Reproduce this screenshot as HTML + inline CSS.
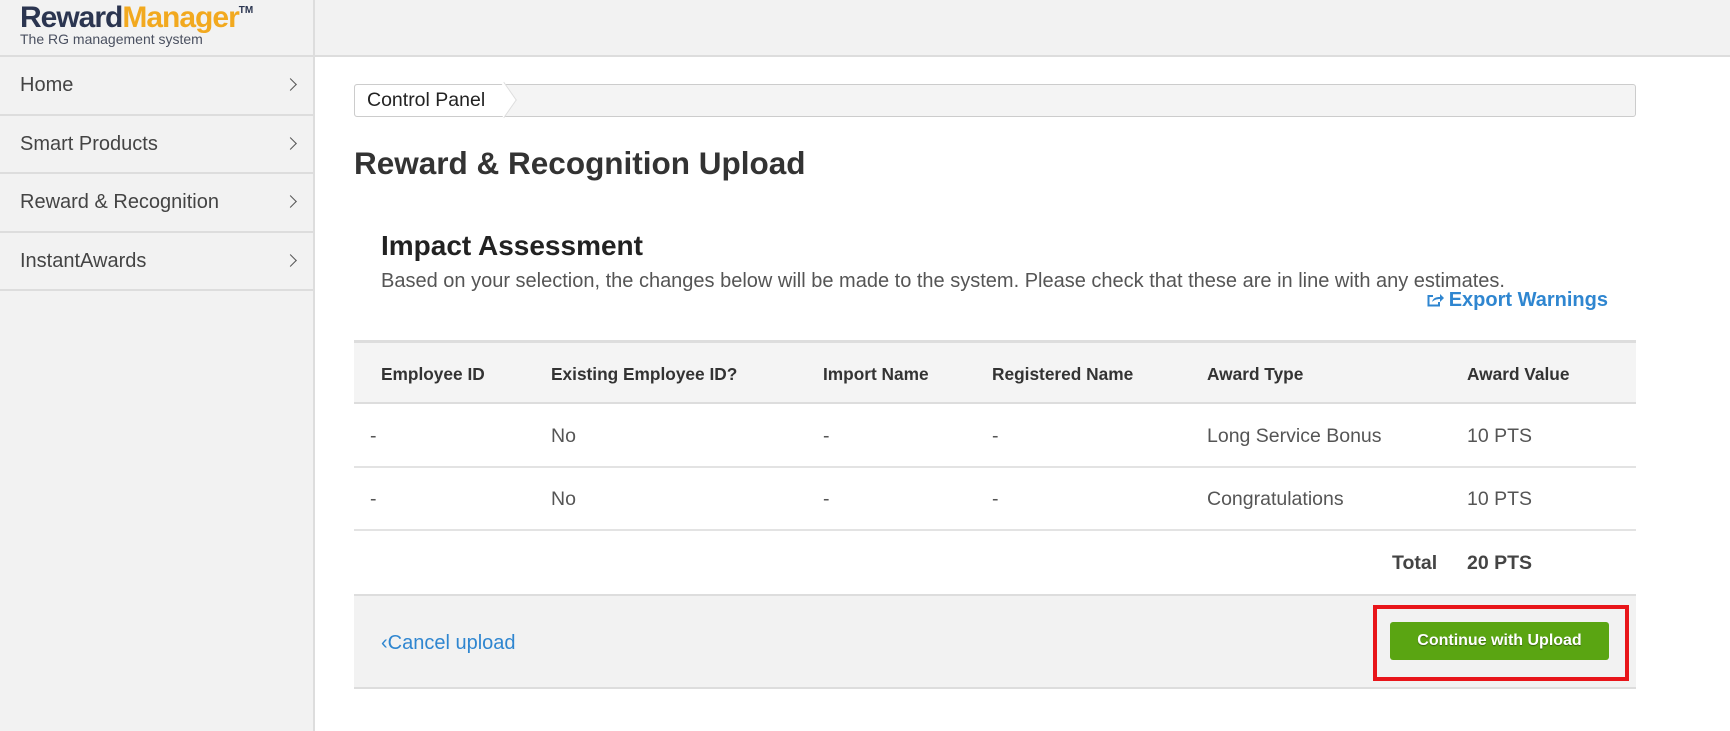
<!DOCTYPE html>
<html><head><meta charset="utf-8"><style>
*{box-sizing:border-box;margin:0;padding:0}
body{width:1730px;height:731px;overflow:hidden;background:#fff;font-family:"Liberation Sans",Arial,sans-serif;position:relative;color:#333}
.top{position:absolute;left:0;top:0;width:1730px;height:57px;background:#f2f2f2;border-bottom:2px solid #ddd}
.side{position:absolute;left:0;top:57px;width:315px;height:674px;background:#f2f2f2;border-right:2px solid #ddd}
.vline{position:absolute;left:313px;top:0;width:2px;height:57px;background:#ddd}
.logo{position:absolute;left:20px;top:1px;font-size:30px;font-weight:bold;letter-spacing:-1px;color:#2b3550}
.logo span{color:#f2a91f}
.logo sup{font-size:10px;color:#2b3550;letter-spacing:0;vertical-align:top;position:relative;top:4px}
.tag{position:absolute;left:20px;top:31px;font-size:14px;color:#4a5060}
.nav{height:58.5px;border-bottom:2px solid #ddd;font-size:20px;color:#444;padding-left:20px;line-height:56px;position:relative}
.nav:after{content:"";position:absolute;right:18px;top:23px;width:8px;height:8px;border-right:1.5px solid #555;border-top:1.5px solid #555;transform:rotate(45deg)}
.bc{position:absolute;left:354px;top:84px;width:1282px;height:33px;border:1px solid #ccc;border-radius:3px;background:#f4f4f4}
.bc .it{position:absolute;left:0;top:0;height:31px;width:148px;background:#fff;border-radius:3px 0 0 3px;font-size:19.5px;line-height:31px;padding-left:12px;color:#222}
.bc .ar{position:absolute;left:138px;top:4px;width:22px;height:22px;background:#fff;border-right:1px solid #ddd;border-top:1px solid #ddd;transform:rotate(45deg) skew(10deg,10deg)}
h1{position:absolute;left:354px;top:145px;font-size:31.5px;font-weight:bold;color:#333}
h2{position:absolute;left:381px;top:230px;font-size:28px;font-weight:bold;color:#222}
.desc{position:absolute;left:381px;top:270px;font-size:20px;color:#555}
.exp{position:absolute;right:122px;top:289px;font-size:20px;font-weight:bold;color:#2f86d0}
.t{position:absolute;left:354px;width:1282px}
.hd{top:340px;height:64px;background:#f4f4f4;border-top:3px solid #ddd;border-bottom:2px solid #ddd}
.r{border-bottom:2px solid #e3e3e3}
.c{position:absolute;font-size:19.5px;color:#555}
.hd .c{font-weight:bold;color:#333;font-size:17.3px;top:21px}
.foot{top:594px;height:95px;background:#f2f2f2;border-top:2px solid #ddd;border-bottom:2px solid #ddd}
.btn{position:absolute;left:1390px;top:622px;width:219px;height:38px;background:#5aa512;border-radius:3px;color:#fff;font-weight:bold;font-size:16px;text-align:center;line-height:38px;text-shadow:0 1px 1px rgba(0,0,0,.4)}
.red{position:absolute;left:1373px;top:605px;width:256px;height:76px;border:4px solid #e8151a}
</style></head><body>
<div class="top"><div class="vline"></div>
<div class="logo">Reward<span>Manager</span><sup>TM</sup></div>
<div class="tag">The RG management system</div></div>
<div class="side">
<div class="nav">Home</div><div class="nav">Smart Products</div><div class="nav">Reward &amp; Recognition</div><div class="nav">InstantAwards</div>
</div>
<div class="bc"><div class="ar"></div><div class="it">Control Panel</div></div>
<h1>Reward &amp; Recognition Upload</h1>
<h2>Impact Assessment</h2>
<div class="desc">Based on your selection, the changes below will be made to the system. Please check that these are in line with any estimates.</div>
<div class="exp"><svg width="17" height="14" viewBox="0 0 17 14" style="vertical-align:-1px;margin-right:5px"><path d="M6 3H1.5V12.5H12V9" fill="none" stroke="#2f86d0" stroke-width="2"/><path d="M5 9C6 5 9 4 13 4V1L17 5L13 9V6C10 6 7 7 5 9Z" fill="#2f86d0"/></svg>Export Warnings</div>
<div class="t hd">
<div class="c" style="left:27px">Employee ID</div><div class="c" style="left:197px">Existing Employee ID?</div><div class="c" style="left:469px">Import Name</div><div class="c" style="left:638px">Registered Name</div><div class="c" style="left:853px">Award Type</div><div class="c" style="left:1113px">Award Value</div>
</div>
<div class="t r" style="top:404px;height:64px">
<div class="c" style="left:16px;top:21px">-</div><div class="c" style="left:197px;top:21px">No</div><div class="c" style="left:469px;top:21px">-</div><div class="c" style="left:638px;top:21px">-</div><div class="c" style="left:853px;top:21px">Long Service Bonus</div><div class="c" style="left:1113px;top:21px">10 PTS</div>
</div>
<div class="t r" style="top:468px;height:63px">
<div class="c" style="left:16px;top:20px">-</div><div class="c" style="left:197px;top:20px">No</div><div class="c" style="left:469px;top:20px">-</div><div class="c" style="left:638px;top:20px">-</div><div class="c" style="left:853px;top:20px">Congratulations</div><div class="c" style="left:1113px;top:20px">10 PTS</div>
</div>
<div class="t" style="top:531px;height:63px">
<div class="c" style="left:1038px;top:21px;font-weight:bold;color:#444">Total</div><div class="c" style="left:1113px;top:21px;font-weight:bold;color:#444">20 PTS</div>
</div>
<div class="t foot"><div class="c" style="left:27px;top:36px;color:#2f86d0;font-size:20px">‹Cancel upload</div></div>
<div class="btn">Continue with Upload</div>
<div class="red"></div>
</body></html>
